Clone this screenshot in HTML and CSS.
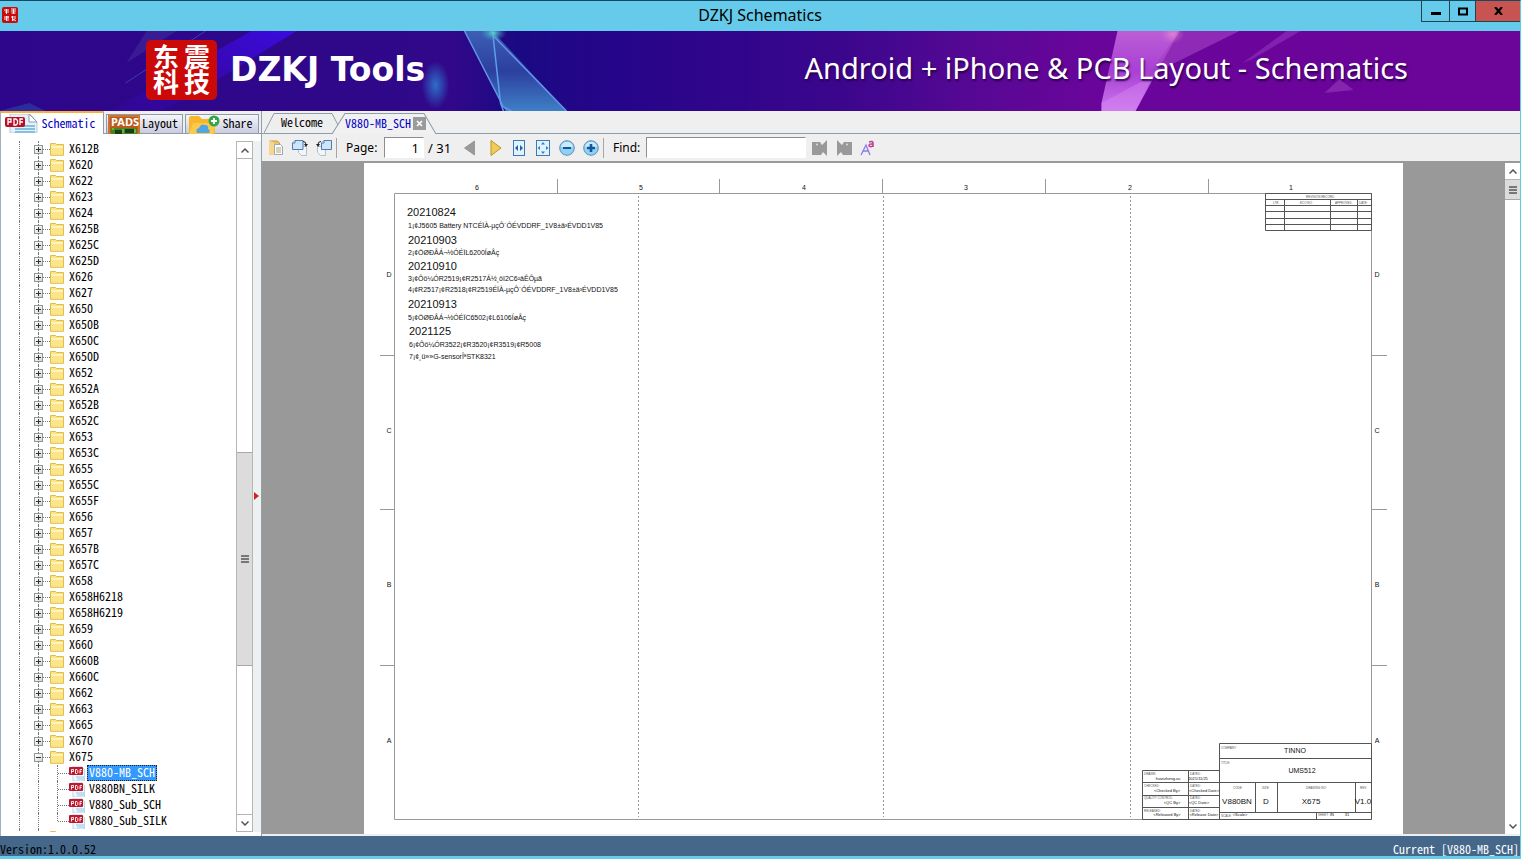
FILE: index.html
```html
<!DOCTYPE html>
<html lang="en">
<head>
<meta charset="utf-8">
<title>DZKJ Schematics</title>
<link rel="stylesheet" href="styles.css">
</head>
<body>
<svg class="defs" aria-hidden="true">
  <symbol id="i-folder" viewBox="0 0 14 13"><path d="M.5.5h5l1 1h7v10.800H.5z" fill="#fbe58a" stroke="#e3bc4c"/><path d="M1.500 3h11.500v2H1.500z" fill="#fff3b8"/></symbol>
  <symbol id="i-pdf" viewBox="0 0 16 15"><path d="M4 0h8l3.500 3.500V15H4z" fill="#eef8fd" stroke="#a9cfe2" stroke-width=".8"/><path d="M7 11h8M8 13h7" stroke="#8fc6ea"/><rect y="1" width="14" height="8" rx="1" fill="#c4162c"/><path d="M2.500 7.500V3.500h2v2h-2M6.500 3.500h1.500l.8 1v2l-.8 1H6.500zM13 3.500h-2v4M11 5.500h1.500" fill="none" stroke="#fff" stroke-width=".9"/></symbol>
  <symbol id="i-up" viewBox="0 0 8 5"><path d="M.5 4.500L4 1l3.500 3.500" fill="none" stroke="#555" stroke-width="1.500"/></symbol>
  <symbol id="i-down" viewBox="0 0 8 5"><path d="M.5.5L4 4 7.500.5" fill="none" stroke="#555" stroke-width="1.500"/></symbol>
  <symbol id="i-grip" viewBox="0 0 8 8"><path d="M0 1h8M0 4h8M0 7h8" stroke="#555" stroke-width="1.600"/></symbol>
</svg>

<header class="titlebar">
  <svg class="app-icon" viewBox="0 0 16 16"><rect width="16" height="16" rx="2" fill="#c40d0d"/><path d="M2 3h5M3 5h4M4.500 2v5M9 2h5M9 4h5M9.500 6h4M11.500 2v5M2 10h5M4.500 9v5M2 12h2M6 9v5M9 10h5M10.500 9v5M11 12l3 2M13.500 11l-3 3" stroke="#fff" stroke-width=".9" fill="none"/></svg>
  <h1 class="title">DZKJ Schematics</h1>
  <div class="win-buttons">
    <button class="min" aria-label="Minimize"><svg width="10" height="10"><path d="M0 7.500h10" stroke="#000" stroke-width="3"/></svg></button>
    <button aria-label="Maximize"><svg width="10" height="9"><path d="M1 1.500h8v6H1z" fill="none" stroke="#000" stroke-width="2"/></svg></button>
    <button class="close" aria-label="Close"><svg width="9" height="8"><path d="M1 0l7 8M8 0L1 8" stroke="#000" stroke-width="2.200"/></svg></button>
  </div>
</header>

<section class="banner">
  <svg class="art" viewBox="0 0 1521 80" preserveAspectRatio="xMidYMid slice" aria-hidden="true">
    <defs>
      <linearGradient id="bg"><stop offset="0" stop-color="#2d068b"/><stop offset=".3" stop-color="#300889"/><stop offset=".34" stop-color="#1a0a82"/><stop offset=".4" stop-color="#25058a"/><stop offset=".55" stop-color="#3a068c"/><stop offset=".64" stop-color="#560894"/><stop offset=".72" stop-color="#6a059b"/><stop offset="1" stop-color="#6b0499"/></linearGradient>
      <linearGradient id="blue" x1="0" y1="0" x2="0" y2="1"><stop offset="0" stop-color="#3d5fb4"/><stop offset=".5" stop-color="#2c3f9f"/><stop offset="1" stop-color="#3f7fc6"/></linearGradient>
      <linearGradient id="beam" x1="0" y1="1" x2="1" y2="0"><stop offset="0" stop-color="#3a06b4" stop-opacity=".2"/><stop offset="1" stop-color="#3b0be0"/></linearGradient>
      <linearGradient id="pink" x1="0" y1="0" x2="0" y2="1"><stop offset="0" stop-color="#bb5fd6"/><stop offset=".5" stop-color="#a93fd4"/><stop offset="1" stop-color="#cb77ef"/></linearGradient>
      <radialGradient id="glow"><stop offset="0" stop-color="#2d6fc8"/><stop offset="1" stop-color="#2d6fc8" stop-opacity="0"/></radialGradient>
      <radialGradient id="spark"><stop offset="0" stop-color="#5fd0d0"/><stop offset="1" stop-color="#3a8fc0" stop-opacity="0"/></radialGradient>
      <radialGradient id="flare"><stop offset="0" stop-color="#f29ad0"/><stop offset="1" stop-color="#e07ccc" stop-opacity="0"/></radialGradient>
    </defs>
    <rect width="1521" height="80" fill="url(#bg)"/>
    <path d="M252 0h45L190 66l-30 14h-50z" fill="url(#beam)"/>
    <path d="M147 0h30l-50 32z" fill="#3f2398" opacity=".7"/>
    <path d="M206 0L126 52" stroke="#4a4fc0" opacity=".7"/>
    <path d="M0 80L30 72l16 8z" fill="#2b47a8" opacity=".6"/>
    <ellipse cx="436" cy="54" rx="14" ry="24" fill="url(#glow)"/>
    <path d="M465 0h28l74 80h-61L465 0z" fill="url(#blue)"/>
    <path d="M493 0l8 72 3 8" fill="none" stroke="#5d9fe8" stroke-width="1.500"/>
    <path d="M465 0l39 76 8 4M493 4l74 76" fill="none" stroke="#6295ea" stroke-width="1.500"/>
    <ellipse cx="494" cy="2" rx="13" ry="8" fill="url(#spark)"/>
    <path d="M1118 0h62l-44 80h-34v-8z" fill="url(#pink)"/>
    <path d="M1102 72l52-28-18 36h-34z" fill="#d688f2" opacity=".45"/>
    <path d="M1180 0h60l-73 36-22 14z" fill="#a13fc3" opacity=".65"/>
    <path d="M1287 0h14l-48 28-10 4z" fill="#8c2eb8" opacity=".7"/>
    <path d="M1325 62l15-14 14 11z" fill="#8524ae"/>
    <ellipse cx="1173" cy="3" rx="12" ry="10" fill="url(#flare)" opacity=".6"/>
  </svg>
  <svg class="logo" viewBox="0 0 71 60" role="img" aria-label="DZKJ logo"><rect width="71" height="60" rx="5" fill="#cb0909"/><g class="logo-text"><text x="7" y="27">东</text><text x="38" y="27">震</text><text x="7" y="52">科</text><text x="38" y="52">技</text></g></svg>
  <strong class="brand">DZKJ Tools</strong>
  <p class="tagline">Android + iPhone &amp; PCB Layout - Schematics</p>
</section>

<main class="main">
  <aside class="side">
    <nav class="side-tabs">
      <button class="stab active"><svg width="34" height="19" viewBox="0 0 34 19"><path d="M5 0h20l7 8v11H5z" fill="#e4f1fa" stroke="#b9c8d4"/><path d="M24 0v8h8z" fill="#fff" stroke="#8ba2b4"/><path d="M12 12h18M10 15h20M10 18h20" stroke="#85bfe0" stroke-width="2"/><rect y="3" width="20" height="10" rx="2" fill="#b90f24"/><path d="M3 11V5h3v3H3M9 5h2l1.500 1.500v3L11 11H9zM18 5h-3v6M15 8h3" fill="none" stroke="#fff" stroke-width="1.300"/></svg><span>Schematic</span></button>
      <button class="stab layout"><svg width="32" height="19" viewBox="0 0 32 19"><rect width="32" height="19" fill="#bb5a1c"/><rect x="1" y="1" width="30" height="18" fill="none" stroke="#e88a45"/><text class="pads" x="3" y="11">PADS</text><path d="M3 13h26v6H3z" fill="#3f8a1e"/><path d="M7 15h7v4H7zM17 14h9v4h-9z" fill="#1e3b1a"/><path d="M4 14h2M15 14v4M27 14v4" stroke="#a8d66b"/></svg><span>Layout</span></button>
      <button class="stab share"><svg width="32" height="19" viewBox="0 0 32 19"><path d="M1 3q0-2 2-2h8l3 3h11q2 0 2 2v13H1z" fill="#f8b62c"/><path d="M5 8h23l-3 11H1z" fill="#fcc94a"/><path d="M9 18q-2-4 2-5 2-5 6-3 4 0 3 4 3 1 1 4z" fill="#4ea6e6"/><circle cx="26" cy="6" r="5.500" fill="#35a648"/><path d="M26 3v6M23 6h6" stroke="#fff" stroke-width="1.800"/></svg><span>Share</span></button>
    </nav>
    <div class="side-body">
      <ul class="tree" id="tree"></ul>
      <div class="scroll">
        <button aria-label="Scroll up"><svg width="8" height="5"><use href="#i-up"/></svg></button>
        <div class="track"><div class="thumb"><svg width="8" height="8"><use href="#i-grip"/></svg></div></div>
        <button aria-label="Scroll down"><svg width="8" height="5"><use href="#i-down"/></svg></button>
      </div>
      <div class="splitter"><svg width="5" height="8"><path d="M0 0l5 4-5 4z" fill="#d3202a"/></svg></div>
    </div>
  </aside>

  <section class="work">
    <nav class="doc-tabs">
      <button class="dtab first"><svg viewBox="0 0 74 20" preserveAspectRatio="none"><path d="M0 20L10 .5h58L74 12" fill="#eee" stroke="#8c9eaa"/></svg><span>Welcome</span></button>
      <div class="dtab current"><svg viewBox="0 0 104 20" preserveAspectRatio="none"><path d="M0 20L13 .5h79L104 20" fill="#f1f1f1" stroke="#8c9eaa"/></svg><span>V880-MB_SCH</span><button class="tab-close" aria-label="Close tab"><svg width="7" height="7"><path d="M1 1l5 5M6 1L1 6" stroke="#fff" stroke-width="1.600"/></svg></button></div>
    </nav>
    <div class="toolbar">
      <button class="tool" aria-label="Open"><svg width="16" height="16"><path d="M1.500 1h8l2 2v11h-10z" fill="#edc36a" stroke="#c99c45"/><path d="M1 .5l5 2V15l-5-1z" fill="#f7d78d"/><path d="M6.500 4.500h6l2 2v8h-8z" fill="#fff" stroke="#9aaabc"/><path d="M8 8h5M8 10h5M8 12h5" stroke="#b9a36c"/></svg></button>
      <button class="tool" aria-label="Rotate right"><svg width="16" height="16"><path d="M6.500 6.500h8v9h-5l-3-3z" fill="#f3f6f8" stroke="#b3c1cb"/><path d="M3 .5h8v9H.5V3z" fill="#cfe4f8" stroke="#4e7db0"/><path d="M3 .5V3H.5" fill="#fff" stroke="#4e7db0"/><path d="M11 1.500q3 0 3 3" fill="none" stroke="#222"/><path d="M12 4h4l-2 3z" fill="#222"/></svg></button>
      <button class="tool" aria-label="Rotate left"><svg width="16" height="16"><path d="M1.500 6.500h8v9h-5l-3-3z" fill="#f3f6f8" stroke="#b3c1cb"/><path d="M8 .5h7.500v9H5.500V3z" fill="#cfe4f8" stroke="#4e7db0"/><path d="M8 .5V3H5.500" fill="#fff" stroke="#4e7db0"/><path d="M5 1.500q-3 0-3 3" fill="none" stroke="#222"/><path d="M0 4h4L2 7z" fill="#222"/></svg></button>
      <label class="page-label" for="page">Page:</label>
      <input class="field page" id="page" value="1">
      <span class="count">/ 31</span>
      <button class="tool" aria-label="Previous page"><svg width="16" height="18"><path d="M12.500 2v14L2.500 9z" fill="#999" stroke="#999"/></svg></button>
      <button class="tool next" aria-label="Next page"><svg width="16" height="18"><path d="M4 1.500v15l10-7.500z" fill="#f2cc55" stroke="#ba9427"/></svg></button>
      <button class="tool" aria-label="Fit width"><svg width="16" height="16"><rect x="2.500" y=".5" width="11" height="15" fill="#e1f2ff" stroke="#3e78b5"/><path d="M7 5v6L4 8zM9 5v6l3-3z" fill="#285f9f"/></svg></button>
      <button class="tool" aria-label="Fit page"><svg width="16" height="16"><rect x="1.500" y=".5" width="13" height="15" fill="#e1f2ff" stroke="#3e78b5"/><path d="M6 4.500L8 2l2 2.500zM6 11.500L8 14l2-2.500zM5 6L2.500 8 5 10zM11 6l2.500 2L11 10z" fill="#397ab7"/></svg></button>
      <button class="tool" aria-label="Zoom out"><svg width="16" height="16"><circle cx="8" cy="8" r="7.300" fill="#8fd0f5" stroke="#5f8fb5"/><path d="M2 7q1-5 6-5t6 5z" fill="#c9eaff"/><path d="M4 8h8" stroke="#155796" stroke-width="2"/></svg></button>
      <button class="tool" aria-label="Zoom in"><svg width="16" height="16"><circle cx="8" cy="8" r="7.300" fill="#8fd0f5" stroke="#5f8fb5"/><path d="M2 7q1-5 6-5t6 5z" fill="#c9eaff"/><path d="M4 8h8M8 4v8" stroke="#155796" stroke-width="2.600"/></svg></button>
      <label class="find-label" for="find">Find:</label>
      <input class="field find" id="find">
      <button class="tool" aria-label="Find previous"><svg width="16" height="16"><path d="M0 2h8l2 3 5-5v16l-4-4-2 3H0z" fill="#999"/><circle cx="5" cy="4.500" r="1" fill="#ddd"/></svg></button>
      <button class="tool" aria-label="Find next"><svg width="16" height="16"><path d="M16 2H8L6 5 1 0v16l4-4 2 3h9z" fill="#999"/><circle cx="11" cy="4.500" r="1" fill="#ddd"/></svg></button>
      <button class="tool" aria-label="Match case"><svg width="16" height="16"><path d="M1 15L6 5l4 10M3 11h6" fill="none" stroke="#8a7be8" stroke-width="1.300"/><path d="M9 2q4-1.500 4 1v4M13 4q-4-.5-4 1.500T13 6" fill="none" stroke="#c03a9b" stroke-width="1.500"/></svg></button>
    </div>
    <div class="viewer">
      <div class="canvas">
        <svg class="sheet" viewBox="364 163 1039 671" role="img" aria-label="Schematic sheet 1">
          <g class="rule">
            <path d="M394.500 193.500h977v626h-977z"/>
            <path d="M557.500 179v14M719.500 179v14M882.500 179v14M1045.500 179v14M1208.500 179v14"/>
            <path d="M380 355.500h14M380 509.500h14M380 665.500h14M1372 355.500h15M1372 509.500h15M1372 665.500h15"/>
            <path class="dash" d="M638.500 196v621M883.500 196v621M1130.500 196v621"/>
          </g>
          <g class="ink">
            <path d="M1265.500 193.500h106v37h-106zM1265.500 199.500h106M1265.500 205.500h106M1265.500 211.500h106M1265.500 218.500h106M1265.500 224.500h106M1284.500 199v31M1330.500 199v31M1357.500 199v31"/>
            <path d="M1219.500 743.500h152v76h-152zM1219.500 758.500h152M1219.500 782.500h152M1219.500 812.500h152M1255.500 783v29M1277.500 783v29M1355.500 783v29M1316.500 812v7"/>
            <path d="M1219 770.500h-76.500v49h77M1142.500 782.500h77M1142.500 795.500h77M1142.500 807.500h77M1188.500 770v49"/>
          </g>
          <g class="t7 mid">
            <text x="477" y="190">6</text><text x="641" y="190">5</text><text x="804" y="190">4</text><text x="966" y="190">3</text><text x="1130" y="190">2</text><text x="1291" y="190">1</text>
            <text x="389" y="277">D</text><text x="389" y="433">C</text><text x="389" y="587">B</text><text x="389" y="743">A</text>
            <text x="1377" y="277">D</text><text x="1377" y="433">C</text><text x="1377" y="587">B</text><text x="1377" y="743">A</text>
            <text x="1295" y="753">TINNO</text><text x="1302" y="773">UMS512</text>
          </g>
          <g class="t11">
            <text x="407" y="216">20210824</text><text x="408" y="244">20210903</text><text x="408" y="270">20210910</text><text x="408" y="308">20210913</text><text x="409" y="335">2021125</text>
          </g>
          <g class="t7">
            <text x="408" y="228">1¡¢J5605 Battery NTCÉÏÀ-µçÔ´ÓÉVDDRF_1V8±ä³ÉVDD1V85</text>
            <text x="408" y="255">2¡¢ÖØÐÂÁ¬½ÓÉÏL6200ÍøÂç</text>
            <text x="408" y="281">3¡¢Ôö¼ÓR2519¡¢R2517Á½¸öI2C6²âÊÔµã</text>
            <text x="408" y="292">4¡¢R2517¡¢R2518¡¢R2519ÉÏÀ-µçÔ´ÓÉVDDRF_1V8±ä³ÉVDD1V85</text>
            <text x="408" y="320">5¡¢ÖØÐÂÁ¬½ÓÉÏC6502¡¢L6106ÍøÂç</text>
            <text x="409" y="347">6¡¢Ôö¼ÓR3522¡¢R3520¡¢R3519¡¢R5008</text>
            <text x="409" y="359">7¡¢¸ü»»G-sensorÎªSTK8321</text>
          </g>
          <g class="t8 mid">
            <text x="1237" y="804">V880BN</text><text x="1266" y="804">D</text><text x="1311" y="804">X675</text><text x="1363" y="804">V1.0</text>
          </g>
          <g class="t4 mid">
            <text x="1168" y="780">huizizheng.xu</text><text x="1198" y="780">2021/11/25</text>
            <text x="1167" y="792">&lt;Checked By&gt;</text><text x="1204" y="792">&lt;Checked Date&gt;</text>
            <text x="1172" y="804">&lt;QC By&gt;</text><text x="1199" y="804">&lt;QC Date&gt;</text>
            <text x="1167" y="816">&lt;Released By&gt;</text><text x="1204" y="816">&lt;Release Date&gt;</text>
            <text x="1240" y="816">&lt;Scale&gt;</text><text x="1332" y="816">IN</text><text x="1347" y="816">31</text>
          </g>
          <g class="t3">
            <text x="1306" y="198">REVISION RECORD</text><text x="1273" y="204">LTR</text><text x="1300" y="204">ECO NO:</text><text x="1335" y="204">APPROVED:</text><text x="1359" y="204">DATE:</text>
            <text x="1221" y="749">COMPANY:</text><text x="1221" y="764">TITLE:</text><text x="1233" y="789">CODE:</text><text x="1262" y="789">SIZE:</text><text x="1306" y="789">DRAWING NO:</text><text x="1360" y="789">REV:</text>
            <text x="1144" y="775">DRAWN:</text><text x="1190" y="775">DATED:</text><text x="1144" y="787">CHECKED:</text><text x="1190" y="787">DATED:</text><text x="1144" y="799">QUALITY CONTROL:</text><text x="1190" y="799">DATED:</text><text x="1144" y="812">RELEASED:</text><text x="1190" y="812">DATED:</text>
            <text x="1221" y="817">SCALE:</text><text x="1318" y="816">SHEET:</text>
          </g>
        </svg>
      </div>
      <div class="scroll doc-scroll">
        <button aria-label="Page up"><svg width="8" height="5"><use href="#i-up"/></svg></button>
        <div class="track"><div class="thumb"><svg width="8" height="8"><use href="#i-grip"/></svg></div></div>
        <button aria-label="Page down"><svg width="8" height="5"><use href="#i-down"/></svg></button>
      </div>
    </div>
  </section>
</main>

<footer class="status"><span>Version:1.0.0.52</span><span class="now">Current [V880-MB_SCH]</span></footer>
<script src="tree.js"></script>
</body>
</html>
```
FILE: styles.css
```css
* { box-sizing: border-box; }
body {
  margin: 0; height: 100vh; overflow: hidden;
  display: flex; flex-direction: column;
  background: #efefef; color: #000;
  border-top: 1px solid #124a66; border-right: 1px solid #5fc9ea; border-bottom: 3px solid #67cbea;
  font-family: "Noto Sans CJK SC", "Liberation Mono", monospace;
  font-size: 12px; line-height: 16px; font-feature-settings: "hwid";
}
button { font: inherit; font-feature-settings: inherit; color: inherit; border: 0; padding: 0; background: none; display: flex; align-items: center; justify-content: center; }
svg { display: block; flex: none; }
.defs { position: absolute; width: 0; height: 0; }

.titlebar { height: 30px; flex: none; background: #66cbea; display: flex; align-items: center; position: relative; padding: 0 18px 2px 2px; font-feature-settings: normal; }
.app-icon { width: 16px; height: 16px; }
.title { margin: 0; flex: 1; text-align: center; font: 400 16px/28px "Noto Sans", sans-serif; }
.win-buttons { position: absolute; top: 0; right: 0; display: flex; height: 21px; border: 1px solid #25414c; border-top: 0; border-right: 0; }
.win-buttons button { width: 26px; border-right: 1px solid #25414c; }
.win-buttons .min { width: 28px; }
.win-buttons .close { width: 44px; background: #c75450; border: 0; }

.banner { height: 80px; flex: none; position: relative; display: flex; align-items: center; padding: 0 112px 2px 146px; background: #3a068c; color: #fff; font-family: "Noto Sans", sans-serif; font-feature-settings: normal; overflow: hidden; }
.art { position: absolute; inset: 0; width: 100%; height: 100%; }
.logo { position: relative; width: 71px; height: 60px; }
.logo-text { font: 700 26px "Noto Sans CJK SC", sans-serif; fill: #fff; }
.brand { position: relative; margin-left: 13px; font: 700 33px/40px "DejaVu Sans", sans-serif; white-space: nowrap; }
.tagline { position: relative; margin: 0 0 4px auto; font-size: 29px; line-height: 36px; font-weight: 400; white-space: nowrap; text-shadow: 1px 2px 2px #28004d; }

.main { flex: 1; min-height: 0; display: flex; }
.side { width: 262px; flex: none; display: flex; flex-direction: column; border-left: 1px solid #9fb2bb; border-right: 1px solid #8fa0aa; }
.side-tabs { height: 23px; flex: none; display: flex; align-items: flex-end; gap: 2px; background: linear-gradient(#efefef 22px, #8c9eaa 22px); }
.stab { height: 20px; gap: 2px; border: 1px solid #8c9eaa; background: linear-gradient(#f6f6fa, #c9cbe0); padding: 0 4px 0 1px; }
.stab span, .dtab span { padding-bottom: 2px; line-height: 14px; }
.stab.layout { width: 77px; }
.stab.share { width: 74px; }
.stab.active { width: 103px; height: 23px; background: #fff; color: #0000c8; border: 0; border-top: 2px solid #fcae3c; border-right: 1px solid #8c9eaa; }
.pads { font: 700 11px "Noto Sans", sans-serif; fill: #fff; }
.side-body { flex: 1; min-height: 0; display: flex; background: #fff; padding: 7px 0 4px; }
.tree { flex: 1; margin: 0; padding: 0; list-style: none; overflow: hidden; position: relative; z-index: 0; }
.tree ul { margin: 0; padding: 0; list-style: none; }
.row { height: 16px; display: flex; align-items: center; padding-left: 33px; position: relative; white-space: nowrap; }
.row::before, .row::after { content: ""; position: absolute; top: 0; bottom: 0; left: 18px; border-left: 1px dotted #777; }
.row::after { left: 37px; z-index: -1; }
.toggle { width: 9px; height: 9px; border: 1px solid #8f9696; background: linear-gradient(135deg, #fff, #d8d8d8); }
.link { width: 7px; border-top: 1px dotted #777; }
.label { margin-left: 3px; padding: 0 2px 2px; line-height: 14px; }
.leaf { padding-left: 56px; }
.leaf .link { width: 11px; }
.leaf .stem { align-self: stretch; border-left: 1px dotted #777; }
.leaf.last .stem { height: 8px; }
.leaf .label { margin-left: 2px; }
.leaf.selected .label { background: #3399ff; color: #fff; outline: 1px dotted #222; outline-offset: -1px; }

.scroll { width: 17px; flex: none; display: flex; flex-direction: column; background: #fff; border: 1px solid #b5b5b5; }
.scroll button { height: 16px; flex: none; }
.track { flex: 1; border: solid #b5b5b5; border-width: 1px 0; padding-top: 293px; }
.thumb { height: 214px; background: #dcdcdc; border: 1px solid #a8a8a8; border-width: 1px 0; display: flex; align-items: center; justify-content: center; }
.splitter { width: 8px; background: #eef1f2; display: flex; align-items: center; padding: 18px 0 0 1px; }

.work { flex: 1; min-width: 0; display: flex; flex-direction: column; }
.doc-tabs { height: 23px; flex: none; display: flex; align-items: flex-end; padding-left: 2px; border-bottom: 1px solid #8c9eaa; }
.dtab { position: relative; height: 20px; display: flex; align-items: center; }
.dtab > svg { position: absolute; inset: 0; width: 100%; height: 100%; }
.dtab span { position: relative; }
.dtab.first { width: 74px; padding-left: 2px; }
.dtab.current { width: 104px; margin-left: -6px; padding-left: 13px; gap: 2px; color: #0000c8; height: 21px; margin-bottom: -1px; }
.tab-close { position: relative; width: 13px; height: 13px; background: #9b9b9b; }
.toolbar { height: 29px; flex: none; display: flex; align-items: center; padding: 0 2px; border-bottom: 2px solid #999; font: 13px/18px "Noto Sans", sans-serif; font-feature-settings: normal; }
.tool { width: 24px; height: 24px; flex: none; }
.next { margin-left: 1px; }
.page-label, .find-label { height: 20px; border-left: 1px solid #a5a5a5; padding-left: 9px; flex: none; width: 48px; font-size: 12px; line-height: 20px; }
.find-label { width: 43px; }
.field { height: 21px; border: 1px solid #8d8d8d; border-color: #8d8d8d #fff #fff #8d8d8d; background: #fff; font: inherit; padding: 0 4px; flex: none; }
.page { width: 40px; text-align: right; }
.count { width: 34px; padding-left: 4px; flex: none; }
.find { width: 160px; margin-right: 2px; }
.viewer { flex: 1; min-height: 0; display: flex; background: #999; border-bottom: 2px solid #efefef; }
.canvas { flex: 1; min-width: 0; padding: 0 102px; overflow: hidden; }
.sheet { width: 100%; background: #fff; font-family: "Liberation Sans", sans-serif; fill: #111; }
.rule path { fill: none; stroke: #999; }
.rule .dash { stroke-dasharray: 2 2; }
.ink path { fill: none; stroke: #555; stroke-width: 1px; }
.mid { text-anchor: middle; }
.t11 { font-size: 11px; }
.t8 { font-size: 8px; }
.t7 { font-size: 7px; }
.t4 { font-size: 4px; }
.t3 { font-size: 3px; fill: #555; }
.doc-scroll { width: 15px; border-width: 0; }
.doc-scroll .track { padding: 0; border-bottom: 0; }
.doc-scroll .thumb { height: 20px; border-top: 0; }

.status { height: 20px; flex: none; display: flex; justify-content: space-between; align-items: flex-end; background: #44678a; line-height: 15px; }
.now { color: #fff; padding-right: 1px; }
```
FILE: tree.js
```js
const folders = ["X612B","X620","X622","X623","X624","X625B","X625C","X625D","X626","X627","X650","X650B","X650C","X650D","X652","X652A","X652B","X652C","X653","X653C","X655","X655C","X655F","X656","X657","X657B","X657C","X658","X658H6218","X658H6219","X659","X660","X660B","X660C","X662","X663","X665","X670","X675",""];
const files = ["V880-MB_SCH","V880BN_SILK","V880_Sub_SCH","V880_Sub_SILK"];
const leaves = files.map((name, i) =>
  `<li class="row leaf${i === 0 ? " selected" : ""}${i === files.length - 1 ? " last" : ""}"><i class="stem"></i><i class="link"></i><svg width="16" height="15"><use href="#i-pdf"/></svg><span class="label">${name}</span></li>`).join("");
document.getElementById("tree").innerHTML = folders.map(name => {
  const open = name === "X675";
  const bars = open ? "M1 3.500h5" : "M1 3.500h5M3.500 1v5";
  return `<li><div class="row"><button class="toggle" aria-label="${open ? "Collapse" : "Expand"} ${name}"><svg width="7" height="7"><path d="${bars}" stroke="#333"/></svg></button><i class="link"></i><svg width="14" height="13"><use href="#i-folder"/></svg><span class="label">${name}</span></div>${open ? `<ul>${leaves}</ul>` : ""}</li>`;
}).join("");
```
